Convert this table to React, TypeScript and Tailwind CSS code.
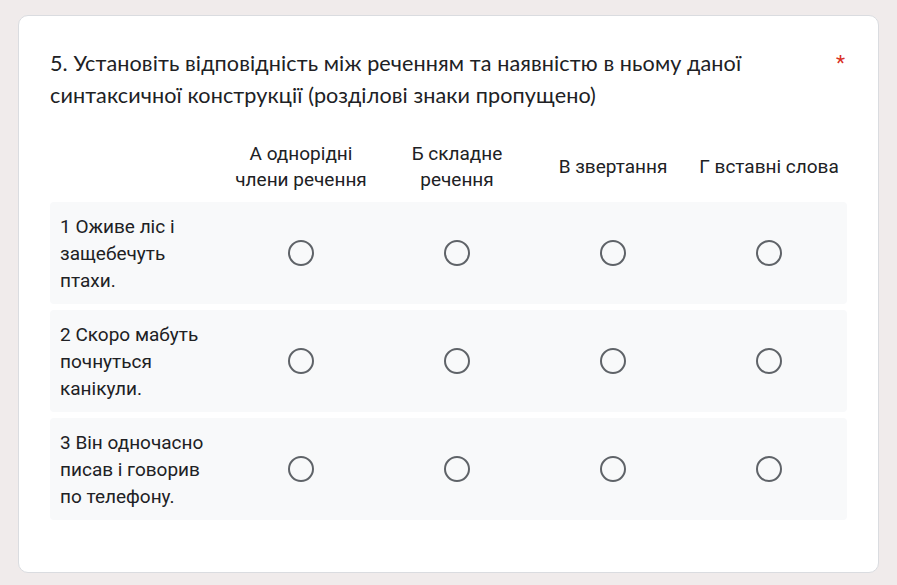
const columns = [
  ["А однорідні", "члени речення"],
  ["Б складне", "речення"],
  ["В звертання"],
  ["Г вставні слова"],
];

const rows = [
  "1 Оживе ліс і защебечуть птахи.",
  "2 Скоро мабуть почнуться канікули.",
  "3 Він одночасно писав і говорив по телефону.",
];

function Radio() {
  return <div className="w-[26px] h-[26px] rounded-full border-2 border-[#5f6368] bg-transparent" />;
}

export default function App() {
  return (
    <div className="min-h-screen bg-[#f0ebeb] pt-[15px] px-[18px] pb-[12px] font-[Roboto] text-[#202124]">
      <div className="w-[861px] h-[558px] bg-white border border-[#dadce0] rounded-[10px] px-[31px] pt-[31px]">
        <div className="flex justify-between">
          <div className="font-[Lato] text-[21.6px] leading-[32px] tracking-[0.1px]">
            5. Установіть відповідність між реченням та наявністю в ньому даної
            <br />
            синтаксичної конструкції (розділові знаки пропущено)
          </div>
          <span className="text-[#d93025] text-[21px] leading-[32px] mr-[2px]">*</span>
        </div>

        <div className="mt-[30px] grid grid-cols-[173px_repeat(4,1fr)] text-[19px] leading-[26px]">
          <div />
          {columns.map((c, i) => (
            <div key={i} className="h-[52px] flex flex-col items-center justify-center text-center">
              {c.map((l) => (
                <span key={l}>{l}</span>
              ))}
            </div>
          ))}
        </div>

        <div className="mt-[9px] flex flex-col gap-[6px]">
          {rows.map((r) => (
            <div
              key={r}
              className="h-[102px] bg-[#f8f9fa] rounded-[4px] grid grid-cols-[173px_repeat(4,1fr)] items-center"
            >
              <div className="pl-[10px] pr-[8px] text-[19px] leading-[27px]">{r}</div>
              {columns.map((_, i) => (
                <div key={i} className="flex justify-center">
                  <Radio />
                </div>
              ))}
            </div>
          ))}
        </div>
      </div>
    </div>
  );
}
